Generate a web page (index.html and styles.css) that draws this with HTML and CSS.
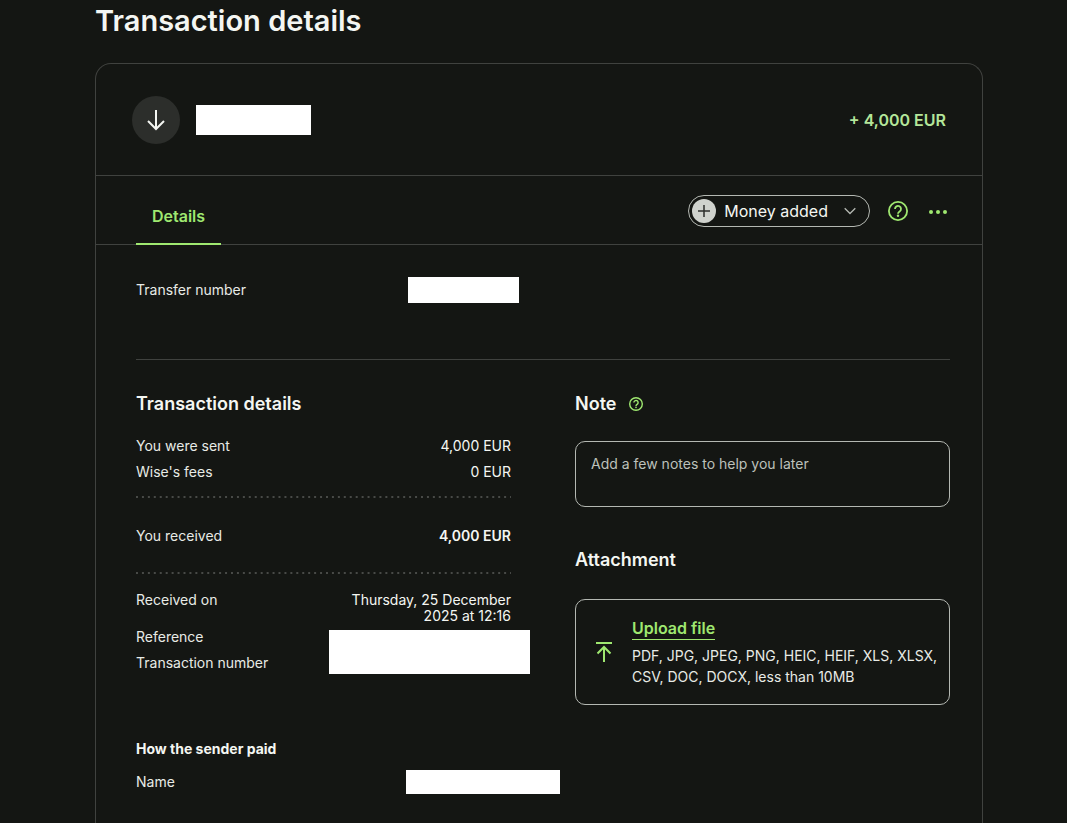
FILE: index.html
```
<!DOCTYPE html>
<html lang="en">
<head>
    <meta charset="UTF-8">
    <meta name="viewport" content="width=device-width, initial-scale=1.0">
    <title>Transaction details</title>
    <link rel="stylesheet" href="styles.css">
</head>
<body>
    <main class="page">
        <h1>Transaction details</h1>
        <section class="card">
            <header class="card-header">
                <span class="avatar">
                    <svg width="24" height="24" viewBox="0 0 24 24" fill="none" stroke="currentColor" stroke-width="2"><path d="M12 2v19M4 13l8 8 8-8"/></svg>
                </span>
                <span class="redacted redacted-sender"></span>
                <span class="amount">+ 4,000 EUR</span>
            </header>

            <div class="toolbar">
                <nav class="tabs">
                    <a class="tab" href="#details">Details</a>
                </nav>
                <div class="actions">
                    <button class="category" type="button">
                        <span class="category-icon">
                            <svg width="12" height="12" viewBox="0 0 12 12" stroke="currentColor" stroke-width="1.5"><path d="M6 0v12M0 6h12"/></svg>
                        </span>
                        Money added
                        <svg class="chevron" width="12" height="12" viewBox="0 0 12 12" fill="none" stroke="currentColor" stroke-width="1.3"><path d="M0.7 3.2L6 8.5l5.3-5.3"/></svg>
                    </button>
                    <button class="icon-button" type="button" aria-label="Help">
                        <svg width="20" height="20" viewBox="0 0 20 20" fill="none" stroke="currentColor" stroke-width="1.8"><circle cx="10" cy="10" r="9.1"/><path d="M7 8a3 3 0 1 1 4.600 2.500C10.500 11.200 10 11.600 10 12.800"/><circle cx="10" cy="14.800" r="1.200" fill="currentColor" stroke="none"/></svg>
                    </button>
                    <button class="icon-button" type="button" aria-label="More">
                        <svg width="20" height="20" viewBox="0 0 20 20" fill="currentColor"><circle cx="3" cy="11" r="2"/><circle cx="10" cy="11" r="2"/><circle cx="17" cy="11" r="2"/></svg>
                    </button>
                </div>
            </div>

            <div class="card-body" id="details">
                <dl class="transfer">
                    <dt>Transfer number</dt>
                    <dd><span class="redacted redacted-transfer"></span></dd>
                </dl>

                <div class="columns">
                    <section>
                        <h2>Transaction details</h2>
                        <dl class="rows">
                            <dt>You were sent</dt>
                            <dd>4,000 EUR</dd>
                            <dt>Wise's fees</dt>
                            <dd>0 EUR</dd>
                        </dl>
                        <dl class="rows total">
                            <dt>You received</dt>
                            <dd><strong>4,000 EUR</strong></dd>
                        </dl>
                        <dl class="rows">
                            <dt>Received on</dt>
                            <dd>Thursday, 25 December 2025 at 12:16</dd>
                        </dl>
                        <dl class="rows references">
                            <dt>Reference</dt>
                            <dd class="both-rows"><span class="redacted redacted-reference"></span></dd>
                            <dt>Transaction number</dt>
                        </dl>
                        <h3>How the sender paid</h3>
                        <dl class="rows sender">
                            <dt>Name</dt>
                            <dd><span class="redacted redacted-name"></span></dd>
                        </dl>
                    </section>

                    <section>
                        <div class="note-title">
                            <h2><label for="note">Note</label></h2>
                            <button class="icon-button" type="button" aria-label="About notes">
                                <svg width="14" height="14" viewBox="0 0 20 20" fill="none" stroke="currentColor" stroke-width="2"><circle cx="10" cy="10" r="9"/><path d="M7 8a3 3 0 1 1 4.600 2.500C10.500 11.200 10 11.600 10 12.800"/><circle cx="10" cy="14.800" r="1.200" fill="currentColor" stroke="none"/></svg>
                            </button>
                        </div>
                        <textarea id="note" placeholder="Add a few notes to help you later"></textarea>
                        <h2>Attachment</h2>
                        <div class="upload">
                            <svg width="16" height="20" viewBox="0 0 16 20" fill="none" stroke="currentColor" stroke-width="2"><path d="M0 1h16M8 20V5M1.500 11.500L8 5l6.500 6.500"/></svg>
                            <div class="upload-text">
                                <a href="#upload">Upload file</a>
                                <p>PDF, JPG, JPEG, PNG, HEIC, HEIF, XLS, XLSX, CSV, DOC, DOCX, less than 10MB</p>
                            </div>
                        </div>
                    </section>
                </div>
            </div>
        </section>
    </main>
</body>
</html>
```
FILE: styles.css
```
* {
    box-sizing: border-box;
}
body {
    margin: 0;
    background-color: #141613;
    color: #e8ebe6;
    font-family: Inter, "Liberation Sans", sans-serif;
    font-size: 14px;
    line-height: 16px;
}
h1, h2, h3, dl, dd, p {
    margin: 0;
}
.page {
    display: flex;
    flex-direction: column;
    min-height: 100vh;
    padding: 3px 84px 0 95px;
}
h1 {
    margin-bottom: 24px;
    color: #f4f6f2;
    font-size: 29px;
    font-weight: 600;
    line-height: 36px;
}
h2 {
    color: #f4f6f2;
    font-size: 18px;
    font-weight: 600;
    line-height: 24px;
}
h3 {
    color: #f4f6f2;
    font-size: 14px;
    font-weight: 700;
}
.card {
    flex: 1;
    border: 1px solid #40423f;
    border-bottom: 0;
    border-radius: 16px 16px 0 0;
}
.card-header {
    display: flex;
    align-items: center;
    gap: 16px;
    height: 112px;
    padding: 0 36px;
    border-bottom: 1px solid #40423f;
}
.avatar {
    display: flex;
    align-items: center;
    justify-content: center;
    width: 48px;
    height: 48px;
    border-radius: 50%;
    background: #2c2e2b;
    color: #f4f6f2;
}
.redacted {
    display: block;
    background: #fff;
}
.redacted-sender {
    width: 115px;
    height: 30px;
}
.amount {
    margin-left: auto;
    color: #b4e69a;
    font-size: 16px;
    font-weight: 600;
}
.toolbar {
    display: flex;
    justify-content: space-between;
    height: 69px;
    padding: 0 34px 0 40px;
    border-bottom: 1px solid #40423f;
}
.tabs {
    display: flex;
    margin-bottom: -1px;
}
.tab {
    padding: 32px 16px 0;
    border-bottom: 2px solid #9fe870;
    color: #9fe870;
    font-size: 16px;
    font-weight: 600;
    text-decoration: none;
}
.actions {
    display: flex;
    align-items: center;
    gap: 18px;
    height: 70px;
}
button {
    padding: 0;
    border: 0;
    background: none;
    font: inherit;
    cursor: pointer;
}
.category {
    display: flex;
    align-items: center;
    gap: 8px;
    height: 32px;
    padding: 0 13px 0 3px;
    border: 1px solid #b4b8b2;
    border-radius: 16px;
    color: #f4f6f2;
    font-size: 16px;
}
.category-icon {
    display: flex;
    align-items: center;
    justify-content: center;
    width: 24px;
    height: 24px;
    border-radius: 50%;
    background: #cfd2cd;
    color: #2c2e2b;
}
.chevron {
    margin-left: 8px;
    color: #b4b8b2;
}
.icon-button {
    display: flex;
    color: #9fe870;
}
.actions .icon-button + .icon-button {
    margin-left: 2px;
}
.card-body {
    padding: 32px 32px 28px 40px;
}
.transfer {
    display: grid;
    grid-template-columns: 1fr 2fr;
    column-gap: 1px;
    align-items: center;
    height: 83px;
    padding-bottom: 57px;
    border-bottom: 1px solid #40423f;
}
.redacted-transfer {
    width: 111px;
    height: 26px;
}
.columns {
    display: grid;
    grid-template-columns: 1fr 1fr;
    gap: 64px;
    padding-top: 32px;
}
.columns h2 + .rows {
    margin-top: 22px;
}
.rows {
    display: grid;
    grid-template-columns: 1fr 1fr;
    gap: 10px 0;
}
.rows dd {
    justify-self: end;
    color: #f4f6f2;
    text-align: right;
}
strong {
    font-weight: 600;
}
.total {
    margin: 16px 0 18px;
    padding: 32px 0 30px;
    background-image: radial-gradient(circle at 1px 1px, #484a47 1px, transparent 1px), radial-gradient(circle at 1px 1px, #484a47 1px, transparent 1px);
    background-position: left top, left bottom;
    background-repeat: round no-repeat;
    background-size: 6px 2px;
}
.references {
    margin-top: 5px;
}
.both-rows {
    grid-row: span 2;
}
.redacted-reference {
    width: 201px;
    height: 44px;
    margin: 1px -19px -3px 0;
}
.references + h3 {
    margin-top: 70px;
    margin-bottom: 13px;
}
.sender {
    align-items: center;
}
.redacted-name {
    width: 154px;
    height: 24px;
    margin-right: -49px;
}
.note-title {
    display: flex;
    align-items: center;
    gap: 13px;
}
textarea {
    display: block;
    width: 100%;
    height: 66px;
    margin: 25px 0 41px;
    padding: 14px 15px;
    border: 1px solid #b4b8b2;
    border-radius: 10px;
    background: none;
    color: #f4f6f2;
    font: inherit;
    resize: none;
}
textarea::placeholder {
    color: #bdc1bb;
}
.upload {
    display: flex;
    align-items: center;
    gap: 20px;
    margin-top: 27px;
    padding: 17px 8px 17px 20px;
    border: 1px solid #b4b8b2;
    border-radius: 10px;
    color: #9fe870;
}
.upload svg {
    flex: none;
}
.upload a {
    display: inline-block;
    border-bottom: 1px solid #9fe870;
    color: #9fe870;
    font-size: 16px;
    font-weight: 600;
    line-height: 22px;
    text-decoration: none;
}
.upload p {
    margin-top: 5px;
    color: #e8ebe6;
    line-height: 21px;
}
```
